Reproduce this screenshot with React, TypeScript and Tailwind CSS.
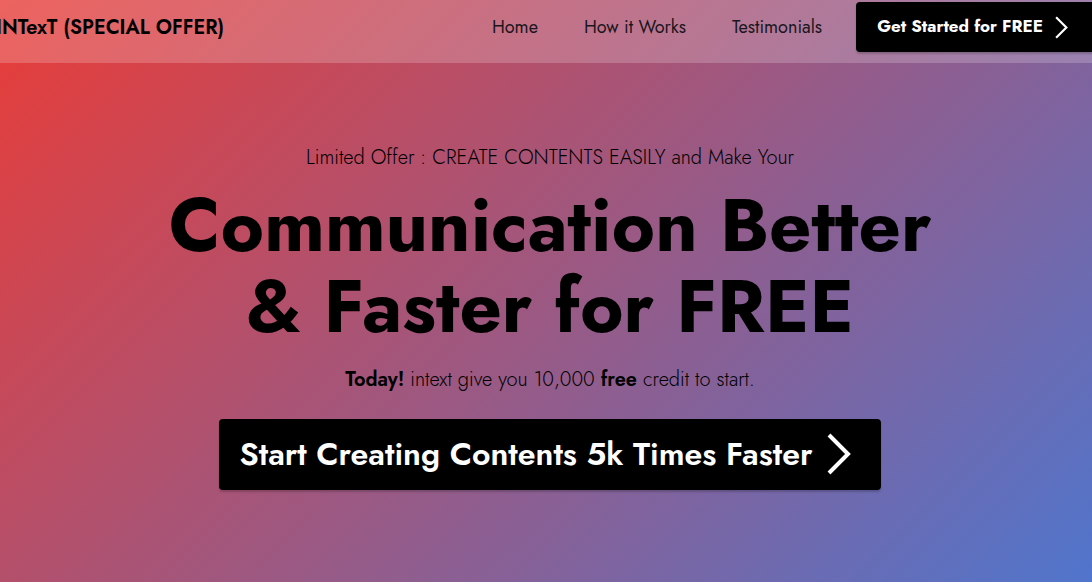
import React from "react";

const navItems = [
  { label: "Home", href: "#home" },
  { label: "How it Works", href: "#how-it-works" },
  { label: "Testimonials", href: "#testimonials" },
];

function Chevron({ className }: { className: string }) {
  return (
    <svg viewBox="0 0 24 42" className={className} fill="none" stroke="currentColor" strokeWidth="4" aria-hidden="true">
      <path d="M2 2 L21 21 L2 40" />
    </svg>
  );
}

export default function App() {
  return (
    <div className="flex min-h-screen flex-col overflow-hidden bg-linear-135/srgb from-[#e93c37] to-[#5075cc] font-['Jost','Lato',sans-serif] text-black">
      <header className="-ml-1 -mr-2 flex h-[63px] items-start justify-between bg-white/20 pt-0.5">
        <a href="#home" className="flex h-[52px] items-center whitespace-nowrap text-[20px] font-semibold">
          INTexT (SPECIAL OFFER)
        </a>
        <div className="flex items-center">
          <nav className="mr-[34px] flex gap-[46px] text-[18px] text-[#1a1620]">
            {navItems.map((item) => (
              <a key={item.href} href={item.href} className="whitespace-nowrap">
                {item.label}
              </a>
            ))}
          </nav>
          <button type="button" className="flex h-[50px] items-center gap-3 whitespace-nowrap rounded bg-black pl-[21px] pr-8 text-[17px] font-bold text-white shadow-[0_2px_2px_rgba(0,0,0,0.2)]">
            Get Started for FREE
            <Chevron className="h-[23px] w-[13px]" />
          </button>
        </div>
      </header>
      <main className="flex flex-col items-center pl-2 pt-[81px] text-center">
        <p className="text-[20px] font-light leading-7">Limited Offer : CREATE CONTENTS EASILY and Make Your</p>
        <h1 className="mt-[13px] text-[74px] font-bold leading-[81px]">
          Communication Better
          <br />
          &amp; Faster for FREE
        </h1>
        <p className="mt-[19px] text-[20px] font-light leading-7">
          <strong className="font-semibold">Today!</strong> intext give you 10,000 <strong className="font-semibold">free</strong> credit to start.
        </p>
        <button type="button" className="mt-[25px] flex h-[71px] items-center gap-[15px] whitespace-nowrap rounded bg-black pb-0.5 pl-[21px] pr-[30px] text-[32px] font-semibold text-white shadow-[0_2px_2px_rgba(0,0,0,0.2)]">
          Start Creating Contents 5k Times Faster
          <Chevron className="h-[42px] w-6" />
        </button>
      </main>
    </div>
  );
}
